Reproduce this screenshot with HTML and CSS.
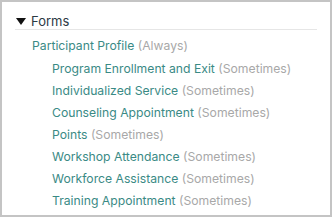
FILE: index.html
```html
<!DOCTYPE html>
<html>
<head>
<meta charset="utf-8">
<link rel="stylesheet" href="styles.css">
</head>
<body>
<div class="frame">
  <div class="header">
    <span class="tri"></span><span class="title">Forms</span>
  </div>
  <ul class="tree">
    <li class="lvl1"><span class="name">Participant Profile</span> <span class="freq">(Always)</span>
      <ul class="sub">
        <li><span class="name">Program Enrollment and Exit</span> <span class="freq">(Sometimes)</span></li>
        <li><span class="name">Individualized Service</span> <span class="freq">(Sometimes)</span></li>
        <li><span class="name">Counseling Appointment</span> <span class="freq">(Sometimes)</span></li>
        <li><span class="name">Points</span> <span class="freq">(Sometimes)</span></li>
        <li><span class="name">Workshop Attendance</span> <span class="freq">(Sometimes)</span></li>
        <li><span class="name">Workforce Assistance</span> <span class="freq">(Sometimes)</span></li>
        <li><span class="name">Training Appointment</span> <span class="freq">(Sometimes)</span></li>
      </ul>
    </li>
  </ul>
</div>
</body>
</html>
```
FILE: styles.css
```css
html, body { margin: 0; padding: 0; background: #fff; }
.frame {
  box-sizing: border-box;
  width: 332px;
  height: 217px;
  border: 2px solid #c4c4c4;
  padding: 10px 13px 0 13px;
  font-family: Inter, "Liberation Sans", sans-serif;
}
.header {
  display: flex;
  align-items: center;
  height: 17px;
  border-bottom: 1px solid #e6e6e6;
}
.tri {
  width: 0; height: 0;
  border-left: 5px solid transparent;
  border-right: 5px solid transparent;
  border-top: 7px solid #111;
  margin: 1px 5px 0 1px;
}
.title { font-size: 13px; color: #2b3a44; }
.tree, .sub { list-style: none; margin: 0; padding: 0; }
.tree { padding-left: 17px; padding-top: 5px; }
.sub { padding-left: 20px; margin-top: 1px; }
.tree li { font-size: 12.2px; line-height: 22px; }
.name { color: #3a8a85; }
.freq { color: #a8a8a8; }
```
